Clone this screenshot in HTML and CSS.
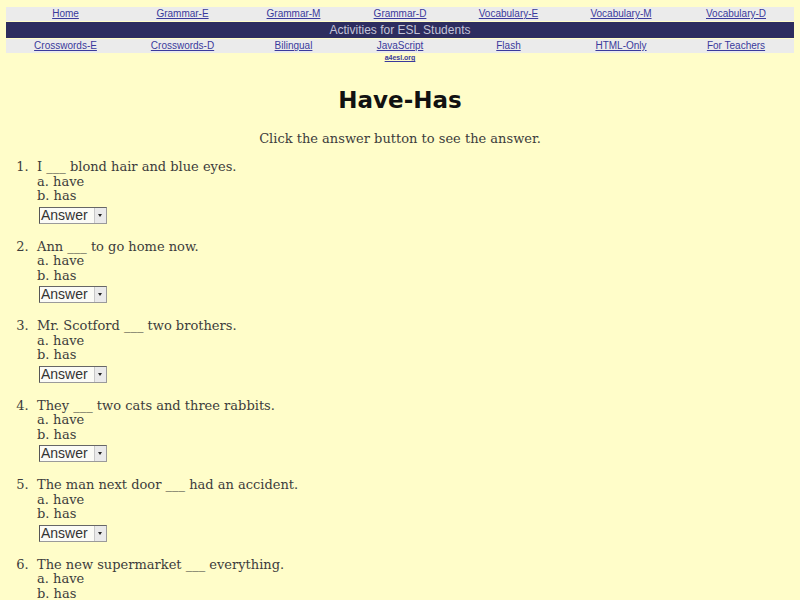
FILE: index.html
```html
<!DOCTYPE html>
<html>
<head>
<meta charset="utf-8">
<title>Have-Has</title>
<link rel="stylesheet" href="styles.css">
</head>
<body>
<nav class="nav">
  <div class="row light">
    <a href="#">Home</a><a href="#">Grammar-E</a><a href="#">Grammar-M</a><a href="#">Grammar-D</a><a href="#">Vocabulary-E</a><a href="#">Vocabulary-M</a><a href="#">Vocabulary-D</a>
  </div>
  <div class="row dark">Activities for ESL Students</div>
  <div class="row light">
    <a href="#">Crosswords-E</a><a href="#">Crosswords-D</a><a href="#">Bilingual</a><a href="#">JavaScript</a><a href="#">Flash</a><a href="#">HTML-Only</a><a href="#">For Teachers</a>
  </div>
  <div class="row under">
    <span></span><span></span><span></span><a href="#" class="tiny">a4esl.org</a>
  </div>
</nav>
<h1 class="title">Have-Has</h1>
<p class="intro">Click the answer button to see the answer.</p>
<ol class="quiz">
  <li><div class="q">I ___ blond hair and blue eyes.</div><div class="opt">a. have</div><div class="opt">b. has</div><div class="sel">Answer<span class="arr"></span></div></li>
  <li><div class="q">Ann ___ to go home now.</div><div class="opt">a. have</div><div class="opt">b. has</div><div class="sel">Answer<span class="arr"></span></div></li>
  <li><div class="q">Mr. Scotford ___ two brothers.</div><div class="opt">a. have</div><div class="opt">b. has</div><div class="sel">Answer<span class="arr"></span></div></li>
  <li><div class="q">They ___ two cats and three rabbits.</div><div class="opt">a. have</div><div class="opt">b. has</div><div class="sel">Answer<span class="arr"></span></div></li>
  <li><div class="q">The man next door ___ had an accident.</div><div class="opt">a. have</div><div class="opt">b. has</div><div class="sel">Answer<span class="arr"></span></div></li>
  <li><div class="q">The new supermarket ___ everything.</div><div class="opt">a. have</div><div class="opt">b. has</div><div class="sel">Answer<span class="arr"></span></div></li>
</ol>
</body>
</html>
```
FILE: styles.css
```css
html, body {
  margin: 0;
  padding: 0;
  background: #fffdc9;
}
body {
  font-family: "DejaVu Serif", serif;
  color: #3c3c3c;
  overflow: hidden;
  height: 600px;
}
.nav {
  margin: 7px 6px 0 6px;
  display: flex;
  flex-direction: column;
  gap: 1px;
}
.row {
  display: grid;
  grid-template-columns: 119px 115px 107px 106px 111px 114px 116px;
  height: 14px;
  align-items: center;
  font-family: "Liberation Sans", Arial, sans-serif;
  font-size: 10px;
}
.row a {
  color: #3a3a9c;
  text-align: center;
  text-decoration: underline;
  line-height: 14px;
}
.light {
  background: #ebebeb;
}
.dark {
  display: block;
  background: #2d2d5f;
  color: #c4c4d8;
  height: 16px;
  line-height: 16px;
  font-size: 12px;
  text-align: center;
}
.under {
  height: 9px;
  margin-top: -1px;
}
.row a.tiny {
  font-size: 7px;
  line-height: 9px;
  font-weight: bold;
}
.title {
  font-family: "DejaVu Sans", sans-serif;
  font-weight: bold;
  font-size: 23px;
  color: #111;
  text-align: center;
  margin: 23px 0 0 0;
  line-height: 30px;
}
.intro {
  font-size: 13px;
  text-align: center;
  margin: 16px 0 0 0;
  line-height: 16px;
}
.quiz {
  margin: 13px 0 0 0;
  padding-left: 37px;
  font-size: 13px;
}
.quiz li {
  margin-bottom: 16px;
  line-height: 14.5px;
}
.quiz li::marker {
  content: counter(list-item) ".\00a0\00a0";
}
.sel {
  display: flex;
  align-items: center;
  justify-content: space-between;
  width: 68px;
  height: 17px;
  margin: 3px 0 0 2px;
  box-sizing: border-box;
  border: 1px solid #9a9a9a;
  border-left-color: #555;
  border-top-color: #666;
  background: #fbfbf6;
  font-family: "Liberation Sans", Arial, sans-serif;
  font-size: 14px;
  color: #333;
  padding-left: 1px;
}
.arr {
  width: 11px;
  height: 15px;
  background: #eaeaea;
  border-left: 1px solid #c8c8c8;
  position: relative;
}
.arr::after {
  content: "";
  position: absolute;
  left: 3px;
  top: 6px;
  border-left: 2.5px solid transparent;
  border-right: 2.5px solid transparent;
  border-top: 3px solid #222;
}
```
